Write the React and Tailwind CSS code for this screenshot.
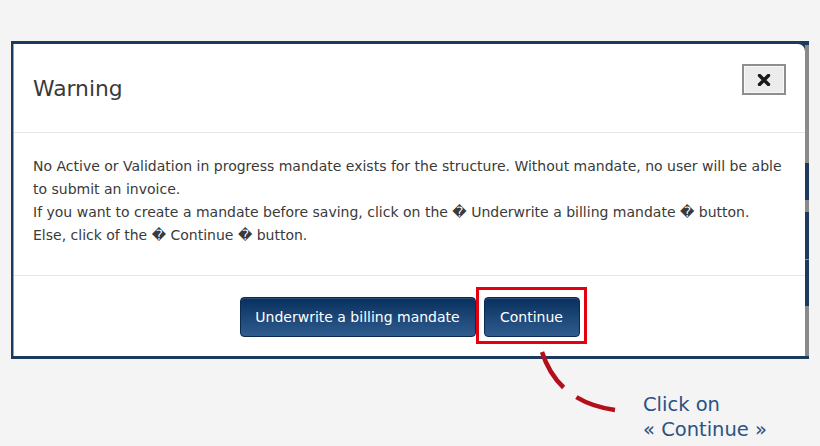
import React from "react";

export default function App() {
  const q = "\uFFFD";
  return (
    <div className="relative w-[820px] h-[446px] overflow-hidden bg-[#f4f4f4] px-[11px] pt-[41px] font-['DejaVu_Sans',sans-serif]">
      {/* modal frame */}
      <div className="flex h-[318px] bg-[#1c3a5e]">
        <div className="flex-1 flex flex-col ml-[2px] mt-[3px] mb-[3px] bg-white rounded-tr-[7px] border-l border-[#9aa3ad]">
          {/* header */}
          <div className="h-[89px] flex justify-between border-b border-[#e6e6e6] pl-[19px] pr-[19px]">
            <div className="pt-[31px] text-[21.8px] leading-[28px] text-[#3a3a3a]">Warning</div>
            <button className="mt-[20px] w-[44px] h-[31px] flex items-center justify-center bg-[#ececec] border-2 border-[#8e8e8e] shadow-[inset_0_0_0_1px_#f8f8f8]">
              <svg width="14" height="12" viewBox="0 0 14 12">
                <path d="M2.5 1.5 L11.5 10.5 M11.5 1.5 L2.5 10.5" stroke="#1a1a1a" strokeWidth="3.4" strokeLinecap="round" />
              </svg>
            </button>
          </div>
          {/* body */}
          <div className="h-[143px] border-b border-[#e6e6e6] pl-[19px] pt-[22px] text-[14px] leading-[23px] text-[#3a3a3a] whitespace-nowrap">
            No Active or Validation in progress mandate exists for the structure. Without mandate, no user will be able
            <br />
            to submit an invoice.
            <br />
            If you want to create a mandate before saving, click on the {q} Underwrite a billing mandate {q} button.
            <br />
            Else, click of the {q} Continue {q} button.
          </div>
          {/* footer */}
          <div className="flex-1 flex justify-center items-start gap-[8px] pt-[21px]">
            <button className="h-[40px] w-[236px] rounded-[4px] border border-[#0a2a50] bg-gradient-to-b from-[#08305e] to-[#2f5d8f] text-white text-[14px] shadow-[inset_0_1px_0_rgba(255,255,255,0.15)]">
              Underwrite a billing mandate
            </button>
            <span className="relative">
              <button className="h-[40px] w-[96px] rounded-[4px] border border-[#0a2a50] bg-gradient-to-b from-[#08305e] to-[#2f5d8f] text-white text-[14px] shadow-[inset_0_1px_0_rgba(255,255,255,0.15)]">
                Continue
              </button>
              <span className="absolute left-[-8px] right-[-7px] top-[-10px] bottom-[-7px] border-[3px] border-[#e3000f] pointer-events-none" />
            </span>
          </div>
        </div>
        {/* right edge strip */}
        <div className="w-[4px] mt-[4px] mb-[3px] flex flex-col bg-[#8a8a8a]">
          <div className="h-[118px]" />
          <div className="h-[37px] bg-[#1c3a5e]" />
          <div className="h-[12px]" />
          <div className="h-[47px] bg-[#1c3a5e]" />
          <div className="h-[1px]" />
          <div className="h-[46px] bg-[#1c3a5e]" />
        </div>
      </div>

      {/* annotation text */}
      <div className="mt-[33px] pl-[632px] text-[19.5px] leading-[25px] text-[#2b5283]">
        <div>Click on</div>
        <div>« Continue »</div>
      </div>

      {/* dashed arrow overlay */}
      <svg className="absolute left-0 top-0 pointer-events-none" width="820" height="446" viewBox="0 0 820 446">
        <path d="M542 352 Q 558 402 615 410" fill="none" stroke="#b3101b" strokeWidth="4.5" strokeDasharray="42 16" />
      </svg>
    </div>
  );
}
